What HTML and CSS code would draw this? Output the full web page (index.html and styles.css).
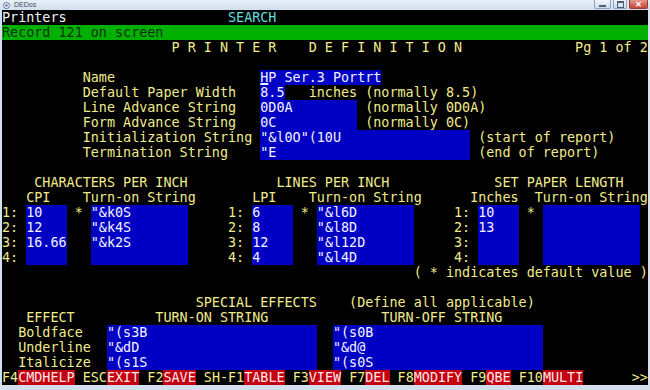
FILE: index.html
```html
<!DOCTYPE html>
<html>
<head>
<meta charset="utf-8">
<title>DEDos</title>
<link rel="stylesheet" href="styles.css">
</head>
<body>
<div class="window">
  <div class="titlebar">
    <svg class="appicon" width="7" height="7" viewBox="0 0 7 7"><circle cx="3.5" cy="3.5" r="3" fill="#fff" stroke="#4a6f9c" stroke-width="1"/><circle cx="3.5" cy="3.5" r="1.2" fill="#4a6f9c"/></svg>
    <span class="title">DEDos</span>
    <div class="buttons">
      <span class="btn min"><span class="glyph-min"></span></span>
      <span class="btn max"><span class="glyph-max"></span></span>
      <span class="btn close">×</span>
    </div>
  </div>
  <div class="screen">
<div class="row"><span class="w">Printers</span>                    <span class="c">SEARCH</span></div>
<div class="row bar">Record 121 on screen</div>
<div class="row">                     P R I N T E R    D E F I N I T I O N              Pg 1 of 2</div>
<div class="row"> </div>
<div class="row">          Name                  <span class="f"><span class="cur">H</span>P Ser.3 Portrt</span></div>
<div class="row">          Default Paper Width   <span class="f">8.5</span>   inches (normally 8.5)</div>
<div class="row">          Line Advance String   <span class="f">0D0A        </span> (normally 0D0A)</div>
<div class="row">          Form Advance String   <span class="f">0C          </span> (normally 0C)</div>
<div class="row">          Initialization String <span class="f">"&amp;l0O"(10U                </span> (start of report)</div>
<div class="row">          Termination String    <span class="f">"E                        </span> (end of report)</div>
<div class="row"> </div>
<div class="row">    CHARACTERS PER INCH           LINES PER INCH             SET PAPER LENGTH</div>
<div class="row">   CPI    Turn-on String       LPI    Turn-on String      Inches  Turn-on String</div>
<div class="row">1: <span class="f">10   </span> * <span class="f">"&amp;k0S       </span>     1: <span class="f">6    </span> * <span class="f">"&amp;l6D       </span>     1: <span class="f">10   </span> * <span class="f">            </span></div>
<div class="row">2: <span class="f">12   </span>   <span class="f">"&amp;k4S       </span>     2: <span class="f">8    </span>   <span class="f">"&amp;l8D       </span>     2: <span class="f">13   </span>   <span class="f">            </span></div>
<div class="row">3: <span class="f">16.66</span>   <span class="f">"&amp;k2S       </span>     3: <span class="f">12   </span>   <span class="f">"&amp;l12D      </span>     3: <span class="f">     </span>   <span class="f">            </span></div>
<div class="row">4: <span class="f">     </span>   <span class="f">            </span>     4: <span class="f">4    </span>   <span class="f">"&amp;l4D       </span>     4: <span class="f">     </span>   <span class="f">            </span></div>
<div class="row">                                                   ( * indicates default value )</div>
<div class="row"> </div>
<div class="row">                        SPECIAL EFFECTS    (Define all applicable)</div>
<div class="row">   EFFECT          TURN-ON STRING              TURN-OFF STRING</div>
<div class="row">  Boldface   <span class="f">"(s3B                     </span>  <span class="f">"(s0B                     </span></div>
<div class="row">  Underline  <span class="f">"&amp;dD                      </span>  <span class="f">"&amp;d@                      </span></div>
<div class="row">  Italicize  <span class="f">"(s1S                     </span>  <span class="f">"(s0S                     </span></div>
<div class="row">F4<span class="r">CMDHELP</span> ESC<span class="r">EXIT</span> F2<span class="r">SAVE</span> SH-F1<span class="r">TABLE</span> F3<span class="r">VIEW</span> F7<span class="r">DEL</span> F8<span class="r">MODIFY</span> F9<span class="r">QBE</span> F10<span class="r">MULTI</span>      &gt;&gt;</div>
  </div>
</div>
</body>
</html>
```
FILE: styles.css
```css
html, body {
  margin: 0;
  padding: 0;
}
body {
  width: 650px;
  height: 390px;
  overflow: hidden;
  background: #d3dfec;
}
.window {
  display: flex;
  flex-direction: column;
  height: 390px;
}
.titlebar {
  height: 10px;
  flex: none;
  display: flex;
  align-items: center;
  gap: 4px;
  padding-left: 3px;
  background: linear-gradient(#e6eef8, #d2dfee);
  overflow: hidden;
}
.appicon {
  display: block;
  flex: none;
}
.title {
  font-family: "Liberation Sans", Arial, sans-serif;
  font-size: 7px;
  line-height: 10px;
  color: #3c4a5c;
}
.buttons {
  margin-left: auto;
  display: flex;
  align-items: flex-start;
  height: 10px;
  gap: 2px;
  padding-right: 2px;
}
.btn {
  display: flex;
  align-items: center;
  justify-content: center;
  height: 9px;
  border: 1px solid #8fa3bb;
  border-top: none;
  box-sizing: border-box;
  background: linear-gradient(#f2f6fb, #cdd9e7);
  border-radius: 0 0 2px 2px;
}
.min { width: 17px; }
.max { width: 14px; }
.close {
  width: 19px;
  background: linear-gradient(#e69a8f, #c5443a);
  border-color: #9a3a32;
  color: #fff;
  font-family: "DejaVu Sans", sans-serif;
  font-size: 9px;
  line-height: 8px;
  font-weight: bold;
}
.glyph-min {
  width: 7px;
  height: 2px;
  margin-top: 3px;
  background: #4d5f77;
}
.glyph-max {
  width: 5px;
  height: 4px;
  border: 1px solid #4d5f77;
  border-top-width: 2px;
}
.screen {
  margin: 0 2px;
  height: 375px;
  flex: none;
  background: #000;
  color: #f0ec8c;
  font-family: "DejaVu Sans Mono", "Liberation Mono", monospace;
  font-size: 13.41px;
  line-height: 15px;
  overflow: hidden;
}
.row {
  height: 15px;
  white-space: pre;
}
.w { color: #f4f4f4; }
.c { color: #62dede; }
.bar {
  background: #00b000;
  color: #0b300b;
}
.f {
  background: #0000c4;
  color: #f2f2ff;
}
.cur {
  text-decoration: underline;
  text-decoration-thickness: 2px;
  text-underline-offset: 1px;
}
.r {
  background: #c40010;
  color: #ffe6e6;
}
```
